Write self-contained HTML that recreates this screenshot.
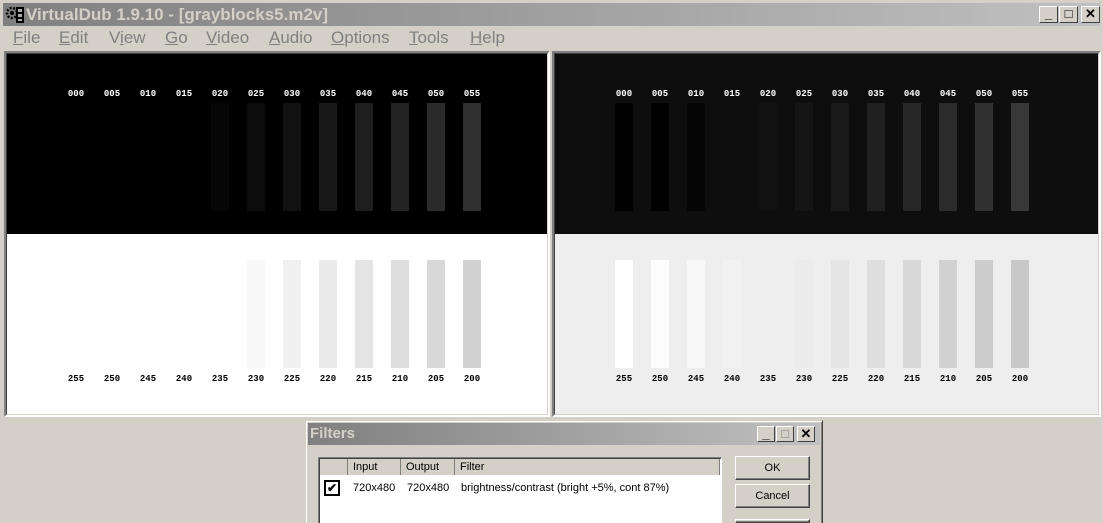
<!DOCTYPE html>
<html style="width:1103px;height:523px;overflow:hidden"><head><style>
*{margin:0;padding:0;box-sizing:border-box}
body{width:1103px;height:523px;background:#d4d0c8;position:relative;overflow:hidden;font-family:"Liberation Sans",sans-serif}
.a{position:absolute}
.tb{left:3px;top:3px;width:1097px;height:23px;background:linear-gradient(90deg,#808080,#c0c0c0)}
.tt{left:26px;top:3px;font-weight:bold;font-size:17px;color:#d4d0c8;line-height:23px;white-space:nowrap}
.wb{top:6px;width:19px;height:17px;background:#d4d0c8;border:1px solid;border-color:#fff #404040 #404040 #fff;font-size:13px;font-weight:bold;text-align:center;line-height:14px;color:#000}
.menu{top:27px;left:0;height:22px;font-size:17px;color:#808080;line-height:22px}
.menu span{position:absolute;white-space:nowrap}
.pane{top:51px;height:366px;border:2px solid;border-color:#808080 #fff #fff #808080}
.in{position:absolute;left:0;top:0;right:0;bottom:0;border:1px solid;border-color:#404040 #d4d0c8 #d4d0c8 #404040;overflow:hidden}
.bar{position:absolute;width:18px;height:108px}
.lb{position:absolute;font:bold 9px "Liberation Mono",monospace;width:30px;text-align:center}
.btn{left:735px;width:75px;height:24px;background:#d4d0c8;border:1px solid;border-color:#fff #404040 #404040 #fff;box-shadow:inset -1px -1px #808080;font-size:11px;text-align:center;line-height:22px}
</style></head><body>
<div class="a tb"></div>
<div class="a" style="left:5px;top:5px;width:20px;height:19px">
<svg width="20" height="19" viewBox="0 0 20 19"><circle cx="7" cy="8" r="5" fill="none" stroke="#000" stroke-width="2.5" stroke-dasharray="2 1.5"/><circle cx="7" cy="8" r="2" fill="#000"/><rect x="11" y="2" width="8" height="16" fill="#000"/><rect x="13" y="4" width="4" height="3" fill="#aaa"/><rect x="13" y="9" width="4" height="3" fill="#aaa"/><rect x="13" y="14" width="4" height="2" fill="#aaa"/></svg></div>
<div class="a tt">VirtualDub 1.9.10 - [grayblocks5.m2v]</div>
<div class="a wb" style="left:1039px">_</div>
<div class="a wb" style="left:1059px">□</div>
<div class="a wb" style="left:1081px">✕</div>
<div class="a menu">
<span style="left:13px"><u>F</u>ile</span><span style="left:59px"><u>E</u>dit</span><span style="left:109px">V<u>i</u>ew</span><span style="left:165px"><u>G</u>o</span><span style="left:206px"><u>V</u>ideo</span><span style="left:269px"><u>A</u>udio</span><span style="left:331px"><u>O</u>ptions</span><span style="left:409px"><u>T</u>ools</span><span style="left:470px"><u>H</u>elp</span>
</div>
<div class="a pane" style="left:4px;width:546px"><div class="in" id="L"></div></div>
<div class="a pane" style="left:552px;width:549px"><div class="in" id="R"></div></div>

<div class="a" style="left:305px;top:420px;width:518px;height:103px;overflow:hidden">
<div class="a" style="left:0;top:0;width:518px;height:120px;border:1px solid;border-color:#d4d0c8 #404040 #404040 #d4d0c8;box-shadow:inset 1px 1px #fff,inset -1px -1px #808080"></div>
</div>
<div class="a" style="left:308px;top:423px;width:512px;height:22px;background:linear-gradient(90deg,#808080,#c0c0c0)"></div>
<div class="a" style="left:310px;top:423px;font-weight:bold;font-size:15px;line-height:22px;color:#d4d0c8">Filters</div>
<div class="a wb" style="left:757px;top:426px;width:18px;height:16px">_</div>
<div class="a wb" style="left:776px;top:426px;width:18px;height:16px;color:#808080">□</div>
<div class="a wb" style="left:797px;top:426px;width:18px;height:16px">✕</div>
<div class="a" style="left:318px;top:457px;width:404px;height:70px;background:#fff;border:1px solid;border-color:#808080 #fff #fff #808080;box-shadow:inset 1px 1px #404040"></div>
<div class="a" style="left:320px;top:459px;width:400px;height:16px;background:#d4d0c8;font-size:11px;line-height:16px">
<div class="a" style="left:0;width:28px;height:16px;border-right:1px solid #808080"></div>
<div class="a" style="left:28px;width:53px;height:16px;border-right:1px solid #808080;padding-left:5px">Input</div>
<div class="a" style="left:81px;width:54px;height:16px;border-right:1px solid #808080;padding-left:5px">Output</div>
<div class="a" style="left:135px;width:265px;height:16px;border-right:1px solid #808080;padding-left:5px">Filter</div>
</div>
<div class="a" style="left:324px;top:480px;width:16px;height:16px;border:2px solid #000;font-size:12px;line-height:12px;text-align:center;font-weight:bold">✔</div>
<div class="a" style="left:353px;top:482px;font-size:11px;white-space:nowrap">720x480</div>
<div class="a" style="left:407px;top:482px;font-size:11px;white-space:nowrap">720x480</div>
<div class="a" style="left:461px;top:482px;font-size:11px;white-space:nowrap">brightness/contrast (bright +5%, cont 87%)</div>
<div class="a btn" style="top:456px">OK</div>
<div class="a btn" style="top:484px">Cancel</div>
<div class="a btn" style="top:519px;height:4px"></div>
<script>
function build(id,topBg,botBg,topC,botC){
 var e=document.getElementById(id),h='';
 h+='<div class="a" style="left:0;top:0;width:100%;height:180px;background:'+topBg+'"></div>';
 h+='<div class="a" style="left:0;top:180px;width:100%;height:200px;background:'+botBg+'"></div>';
 var tl=['000','005','010','015','020','025','030','035','040','045','050','055'];
 var bl=['255','250','245','240','235','230','225','220','215','210','205','200'];
 for(var i=0;i<12;i++){var x=60+i*36;
  h+='<div class="bar" style="left:'+x+'px;top:49px;background:'+topC[i]+'"></div>';
  h+='<div class="bar" style="left:'+x+'px;top:206px;background:'+botC[i]+'"></div>';
  h+='<div class="lb" style="left:'+(x-6)+'px;top:35px;color:#fff">'+tl[i]+'</div>';
  h+='<div class="lb" style="left:'+(x-6)+'px;top:320px;color:#000">'+bl[i]+'</div>';}
 e.innerHTML=h;}
build('L','#000','#fff',
['#000','#000','#000','#000','#060606','#0c0c0c','#121212','#181818','#1e1e1e','#242424','#2a2a2a','#303030'],
['#fff','#fff','#fff','#fff','#fff','#f8f8f8','#f0f0f0','#eaeaea','#e4e4e4','#dedede','#d8d8d8','#d2d2d2']);
build('R','#0e0e0e','#eeeeee',
['#020202','#010101','#050505','#0e0e0e','#111','#151515','#1a1a1a','#202020','#262626','#2b2b2b','#303030','#383838'],
['#fff','#fdfdfd','#f8f8f8','#f2f2f2','#eee','#ebebeb','#e4e4e4','#dedede','#d8d8d8','#d2d2d2','#cdcdcd','#c8c8c8']);
</script>
</body></html>
